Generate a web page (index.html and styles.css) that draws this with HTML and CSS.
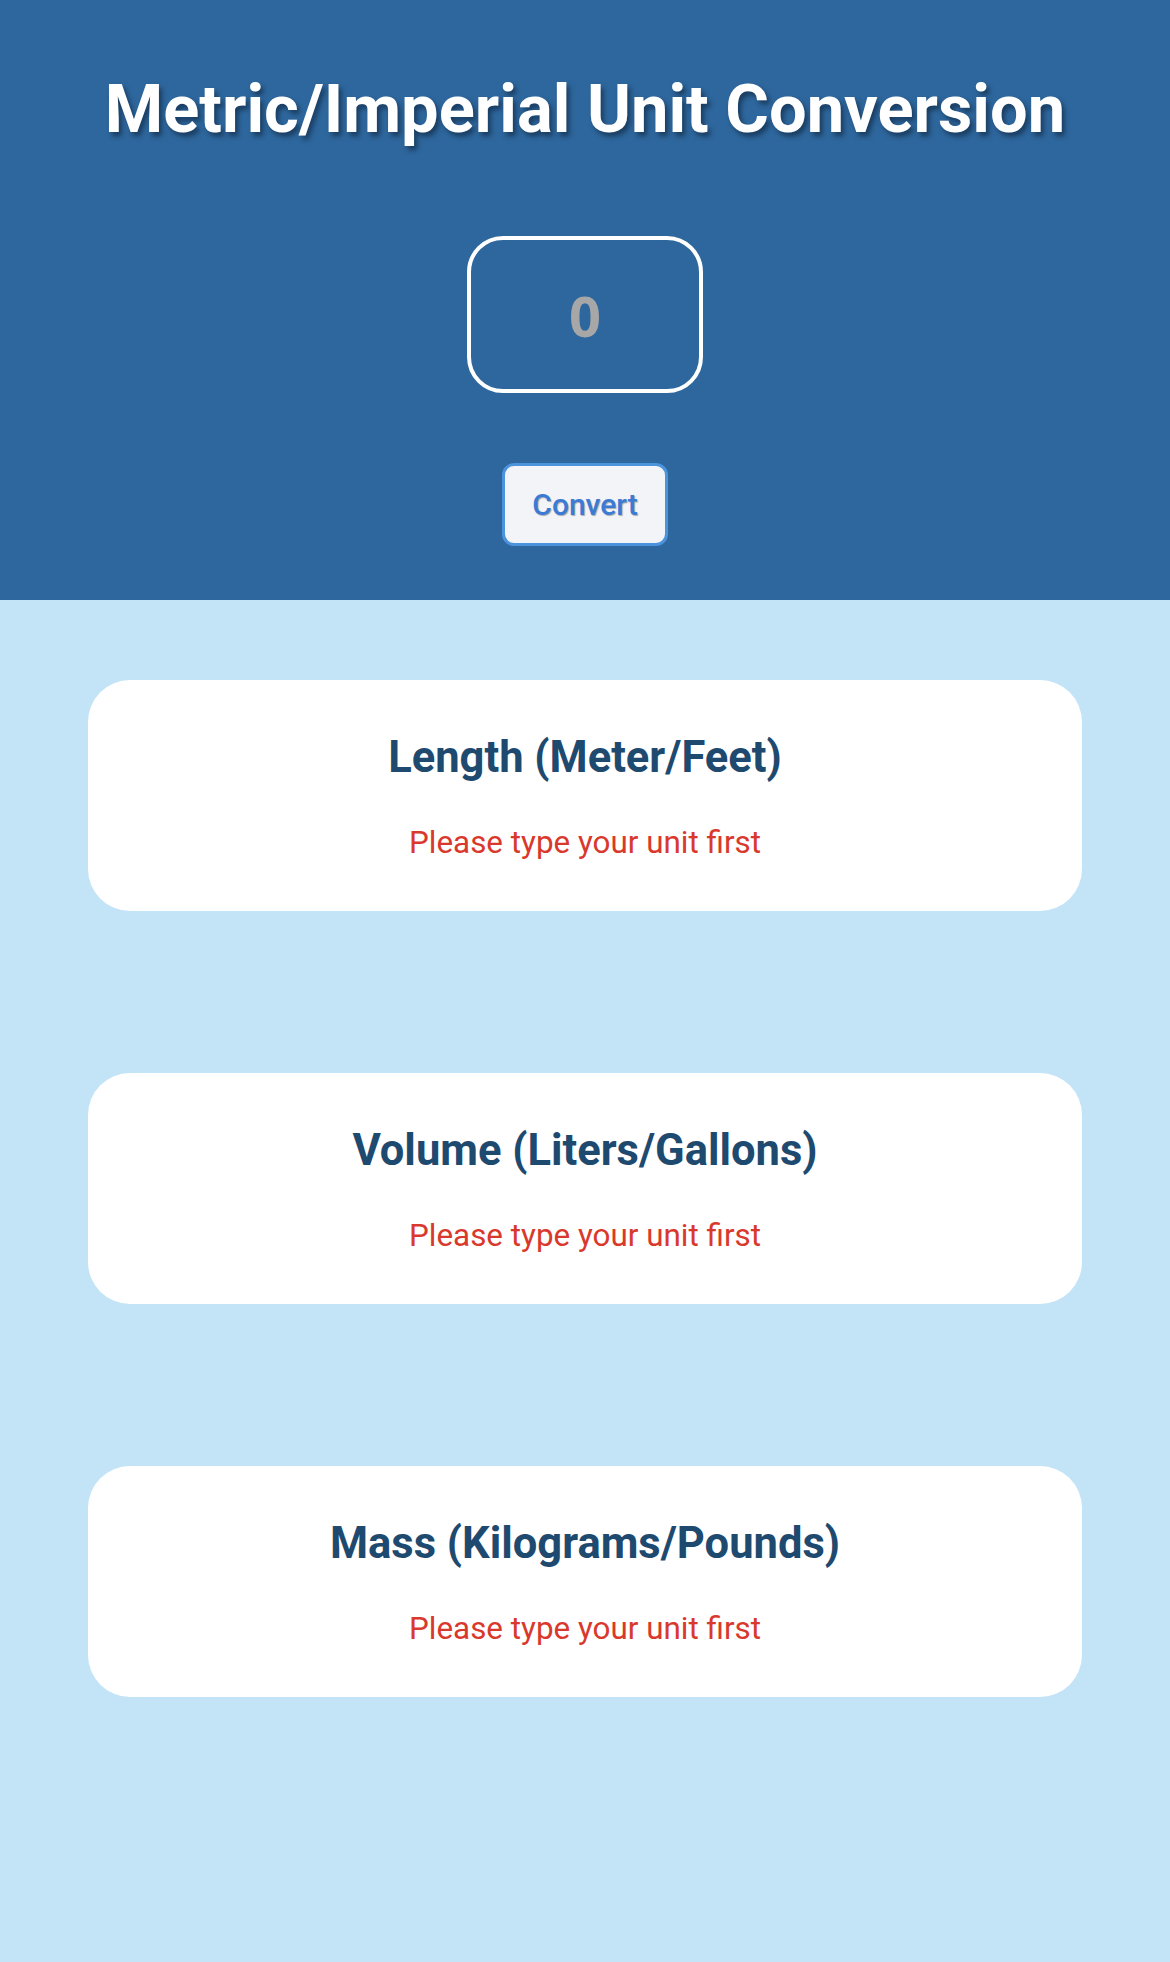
FILE: index.html
```html
<!DOCTYPE html>
<html lang="en">
<head>
<meta charset="utf-8">
<title>Metric/Imperial Unit Conversion</title>
<link rel="stylesheet" href="styles.css">
</head>
<body>
<header class="hero">
  <h1 class="hero-title">Metric/Imperial Unit Conversion</h1>
  <input class="unit-input" type="text" placeholder="0">
  <button class="convert-btn" type="button">Convert</button>
</header>
<main class="results">
  <section class="card">
    <h2 class="card-title">Length (Meter/Feet)</h2>
    <p class="card-msg">Please type your unit first</p>
  </section>
  <section class="card">
    <h2 class="card-title">Volume (Liters/Gallons)</h2>
    <p class="card-msg">Please type your unit first</p>
  </section>
  <section class="card">
    <h2 class="card-title">Mass (Kilograms/Pounds)</h2>
    <p class="card-msg">Please type your unit first</p>
  </section>
</main>
</body>
</html>
```
FILE: styles.css
```css
* { box-sizing: border-box; }

html, body {
  margin: 0;
  padding: 0;
  background: #c3e4f7;
  font-family: Roboto, "Noto Sans", sans-serif;
}

.hero {
  height: 600px;
  background: #2e679d;
  display: flex;
  flex-direction: column;
  align-items: center;
  padding-top: 69px;
}

.hero-title {
  margin: 0;
  font-size: 66.8px;
  line-height: 80px;
  font-weight: 700;
  color: #ffffff;
  text-shadow: 3px 4px 5px rgba(10, 25, 45, 0.55);
}

.unit-input {
  margin-top: 87px;
  width: 236px;
  height: 157px;
  border: 4px solid #ffffff;
  border-radius: 36px;
  background: transparent;
  padding: 0;
  text-align: center;
  font-family: "Open Sans", sans-serif;
  font-weight: 700;
  font-size: 56px;
  color: #ffffff;
  outline: none;
}

.unit-input::placeholder {
  color: #a7a7a7;
  opacity: 1;
}

.convert-btn {
  margin-top: 70px;
  width: 166px;
  height: 83px;
  padding: 0;
  background: #f3f4f7;
  border: 3px solid #4b93db;
  border-radius: 12px;
  font-family: Roboto, sans-serif;
  font-weight: 500;
  font-size: 30px;
  color: #3b7bd6;
  text-shadow: 1px 1px 1px rgba(0, 0, 0, 0.3);
  cursor: pointer;
}

.results {
  display: flex;
  flex-direction: column;
  gap: 162px;
  padding: 80px 88px 0;
}

.card {
  background: #ffffff;
  border-radius: 42px;
  height: 231px;
  padding-top: 52px;
  text-align: center;
}

.card-title {
  margin: 0;
  font-size: 43.5px;
  line-height: 52px;
  font-weight: 700;
  color: #1f4a70;
}

.card-msg {
  margin: 40px 0 0;
  font-size: 31.4px;
  line-height: 38px;
  font-weight: 400;
  color: #d9392c;
}
```
